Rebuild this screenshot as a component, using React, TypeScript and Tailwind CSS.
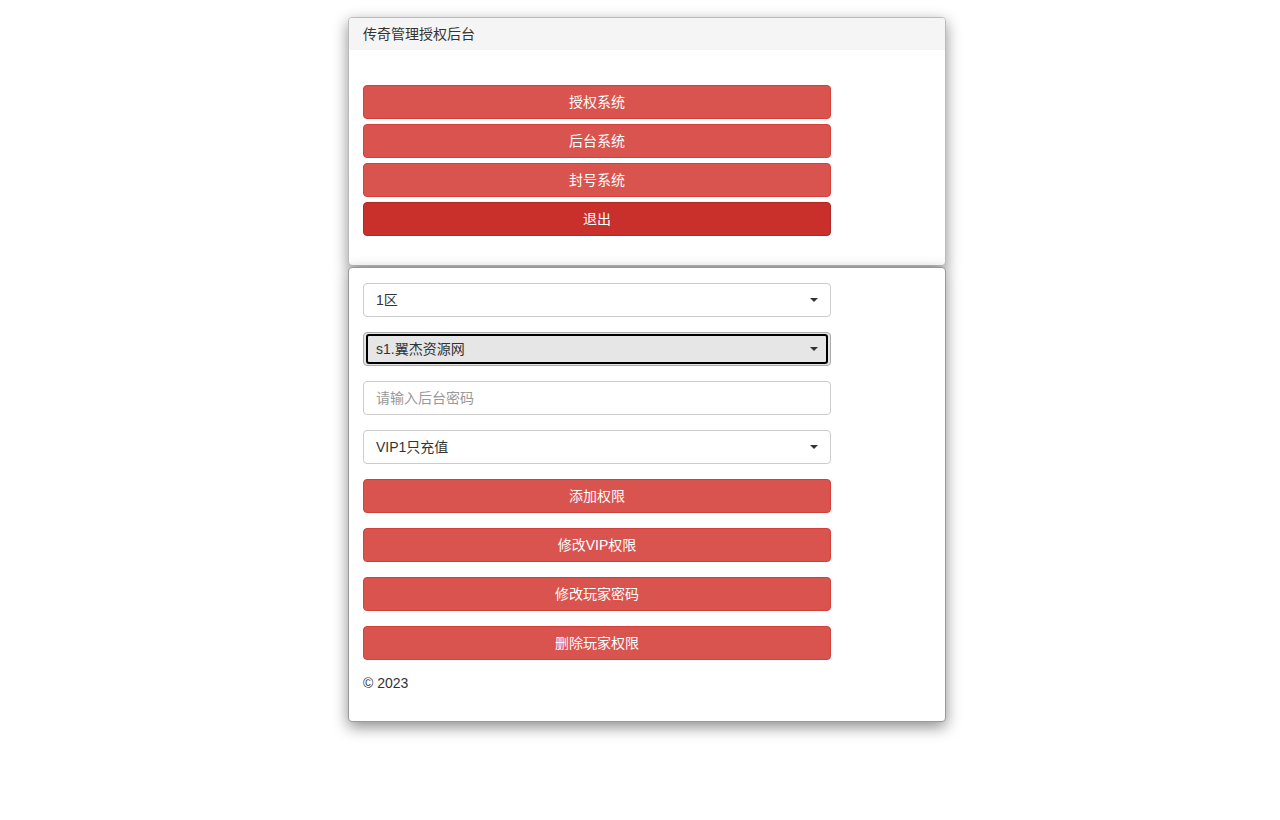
import React from 'react'

const topButtons = ['授权系统', '后台系统', '封号系统']
const actionButtons = ['添加权限', '修改VIP权限', '修改玩家密码', '删除玩家权限']

const font = 'font-["Liberation_Sans","Noto_Sans_CJK_SC",sans-serif]'

function Caret() {
  return <span className="absolute right-[12px] top-1/2 -translate-y-1/2 w-0 h-0 border-l-[4px] border-r-[4px] border-t-[4px] border-l-transparent border-r-transparent border-t-[#333]" />
}

export default function App() {
  return (
    <div className={`min-h-[820px] bg-white pt-[17px] text-[14px] text-[#333] ${font}`}>
      <div className="ml-[348px] w-[598px]">
        {/* Top panel */}
        <div className="border border-[#bbb] rounded-[4px] bg-white shadow-[0_5px_15px_rgba(0,0,0,0.45)] overflow-hidden">
          <div className="h-[32px] bg-[#f5f5f5] px-[14px] flex items-center text-[14px] text-[#333]">传奇管理授权后台</div>
          <div className="px-[14px] pt-[35px] pb-[29px]">
            <div className="w-[468px] flex flex-col gap-[5px]">
              {topButtons.map(b => (
                <button key={b} className="h-[34px] rounded-[4px] bg-[#d9534f] border border-[#d43f3a] text-white text-[14px]">{b}</button>
              ))}
              <button className="h-[34px] rounded-[4px] bg-[#c9302c] border border-[#ac2925] text-white text-[14px]">退出</button>
            </div>
          </div>
        </div>

        {/* Bottom panel */}
        <div className="mt-px border border-[#999] rounded-[4px] bg-white shadow-[0_5px_15px_rgba(0,0,0,0.45)] px-[14px] pt-[15px] pb-[27px]">
          <div className="w-[468px] flex flex-col gap-[15px]">
            <div className="relative h-[34px] rounded-[4px] border border-[#ccc] flex items-center px-[12px] text-[#333]">
              1区
              <Caret />
            </div>
            <div className="relative h-[34px] rounded-[4px] border border-[#aaa] bg-[#e6e6e6] flex items-center px-[2px]">
              <div className="w-full h-[30px] rounded-[3px] border-2 border-black flex items-center px-[8px] text-[#333]">s1.翼杰资源网</div>
              <Caret />
            </div>
            <input
              placeholder="请输入后台密码"
              className="h-[34px] rounded-[4px] border border-[#ccc] px-[12px] text-[14px] text-[#555] placeholder:text-[#999] outline-none"
            />
            <div className="relative h-[34px] rounded-[4px] border border-[#ccc] flex items-center px-[12px] text-[#333]">
              VIP1只充值
              <Caret />
            </div>
            {actionButtons.map(b => (
              <button key={b} className="h-[34px] rounded-[4px] bg-[#d9534f] border border-[#d43f3a] text-white text-[14px]">{b}</button>
            ))}
            <div className="-mt-[2px] text-[14px] text-[#333]">© 2023</div>
          </div>
        </div>
      </div>
    </div>
  )
}
